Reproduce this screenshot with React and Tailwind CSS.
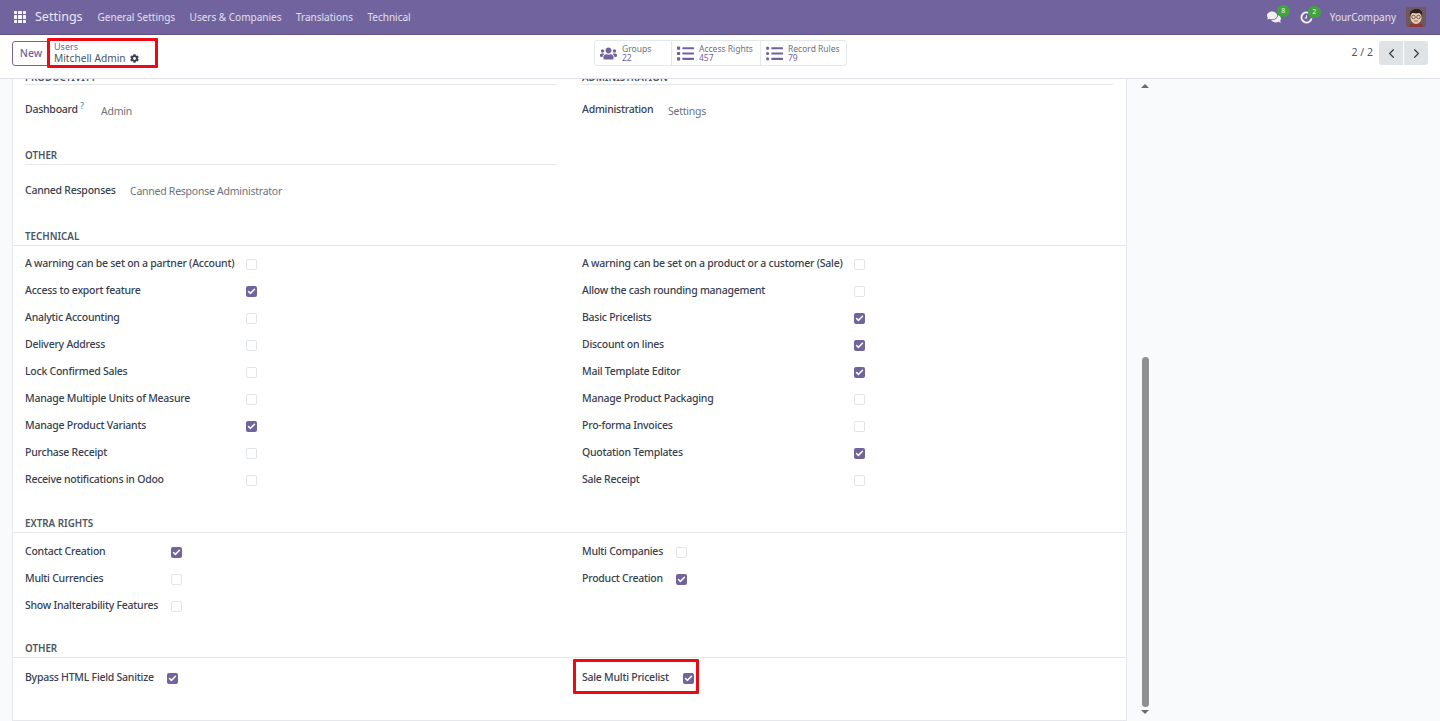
import { FaUsers, FaList, FaListUl, FaCog, FaComments } from 'react-icons/fa'
import { FiCheck, FiChevronLeft, FiChevronRight } from 'react-icons/fi'

const FONT = "font-['Noto_Sans',sans-serif]"

const technicalLeft = [
  ['A warning can be set on a partner (Account)', false],
  ['Access to export feature', true],
  ['Analytic Accounting', false],
  ['Delivery Address', false],
  ['Lock Confirmed Sales', false],
  ['Manage Multiple Units of Measure', false],
  ['Manage Product Variants', true],
  ['Purchase Receipt', false],
  ['Receive notifications in Odoo', false],
]

const technicalRight = [
  ['A warning can be set on a product or a customer (Sale)', false],
  ['Allow the cash rounding management', false],
  ['Basic Pricelists', true],
  ['Discount on lines', true],
  ['Mail Template Editor', true],
  ['Manage Product Packaging', false],
  ['Pro-forma Invoices', false],
  ['Quotation Templates', true],
  ['Sale Receipt', false],
]

const extraLeft = [
  ['Contact Creation', true],
  ['Multi Currencies', false],
  ['Show Inalterability Features', false],
]

const extraRight = [
  ['Multi Companies', false],
  ['Product Creation', true],
]

function Checkbox({ checked }) {
  if (checked) {
    return (
      <span className="w-[11px] h-[11px] mt-[1px] rounded-[2px] bg-[#71639e] flex items-center justify-center shrink-0">
        <FiCheck className="text-white w-[9px] h-[9px]" strokeWidth={4} />
      </span>
    )
  }
  return <span className="w-[11px] h-[11px] mt-[1px] rounded-[2px] border border-[#e2e5e8] bg-white shrink-0" />
}

function Row({ label, checked, labelClass }) {
  return (
    <div className="h-[27px] flex items-center">
      <div className={`${labelClass} text-[10.500px] tracking-[-0.25px] text-[#374151] font-medium whitespace-nowrap`}>{label}</div>
      <Checkbox checked={checked} />
    </div>
  )
}

function Heading({ children }) {
  return (
    <div className="h-[17px] pl-[12px] flex items-center text-[9.800px] font-semibold text-[#4b5563] border-b border-[#e5e7eb]">
      {children}
    </div>
  )
}

function CheckSection({ title, left, right, leftLabel, rightLabel, rowsClass }) {
  return (
    <section>
      <Heading>{title}</Heading>
      <div className={`flex ${rowsClass}`}>
        <div className="w-[569px] pl-[12px]">
          {left.map(([label, checked]) => (
            <Row key={label} label={label} checked={checked} labelClass={leftLabel} />
          ))}
        </div>
        <div>
          {right.map(([label, checked]) => (
            <Row key={label} label={label} checked={checked} labelClass={rightLabel} />
          ))}
        </div>
      </div>
    </section>
  )
}

function StatButton({ icon, label, value, className }) {
  return (
    <div className={`h-[24px] flex items-center border-r border-[#e5e7eb] last:border-r-0 ${className}`}>
      <span className="text-[#71639e] flex justify-center w-[27px] text-[17px] shrink-0">{icon}</span>
      <div className="leading-[9.500px]">
        <div className="text-[8.500px] text-[#6b7280] whitespace-nowrap">{label}</div>
        <div className="text-[8.500px] text-[#71639e]">{value}</div>
      </div>
    </div>
  )
}

function Avatar() {
  return (
    <svg width="20" height="20" viewBox="0 0 20 20" className="rounded-[2px]">
      <rect width="20" height="20" fill="#6e5a5e" />
      <path d="M3 20c0-3 3-4 7-4s7 1 7 4z" fill="#8a3a3a" />
      <ellipse cx="10" cy="10.500" rx="5.500" ry="6.500" fill="#f2cdb0" />
      <path d="M4 9c-1-6 4-7 7-7s6 2 5 7c-1-2-2-3-3-3-3 1-6 0-7 0-1 1-1.500 2-2 3z" fill="#2b211e" />
      <circle cx="7.500" cy="10" r="1.800" fill="none" stroke="#333" strokeWidth=".7" />
      <circle cx="12.500" cy="10" r="1.800" fill="none" stroke="#333" strokeWidth=".7" />
      <path d="M8 14h4" stroke="#8b4a3a" strokeWidth=".8" />
    </svg>
  )
}

export default function App() {
  return (
    <div className={`${FONT} h-[721px] w-[1440px] overflow-hidden flex flex-col bg-[#f9fafb]`}>
      {/* navbar */}
      <header className="h-[35px] shrink-0 bg-[#71639e] border-b border-[#5f5486] flex items-center text-white">
        <div className="ml-[14px] grid grid-cols-3 gap-[1px] w-[12px] h-[12px]">
          {Array.from({ length: 9 }).map((_, i) => (
            <span key={i} className="bg-white/95 rounded-[0.5px]" />
          ))}
        </div>
        <span className="ml-[9px] text-[12.500px] text-white/85">Settings</span>
        <nav className="ml-[15px] flex gap-[14.500px] text-[10px] text-white/80">
          <span>General Settings</span>
          <span>Users &amp; Companies</span>
          <span>Translations</span>
          <span>Technical</span>
        </nav>
        <div className="ml-auto flex items-center">
          <span className="relative mr-[19px]">
            <FaComments className="text-white/90 w-[14px] h-[14px]" />
            <span className="absolute -top-[5px] left-[10px] w-[13px] h-[12px] rounded-full bg-[#3fa33f] text-[7px] leading-[12px] text-center text-white/90">8</span>
          </span>
          <span className="relative mr-[17px]">
            <svg width="13" height="13" viewBox="0 0 14 14" fill="none" stroke="white" strokeWidth="2" opacity=".9" className="block">
              <path d="M9.500 2A5.500 5.500 0 1 0 12.500 8" />
              <path d="M7 4.500V7.500H5" strokeWidth="1.200" />
            </svg>
            <span className="absolute -top-[5px] left-[8px] w-[13px] h-[12px] rounded-full bg-[#3fa33f] text-[7px] leading-[12px] text-center text-white/90">2</span>
          </span>
          <span className="text-[10px] text-white/80">YourCompany</span>
          <span className="ml-[10px] mr-[14px] block"><Avatar /></span>
        </div>
      </header>

      {/* control panel */}
      <div className="h-[44px] shrink-0 bg-white border-b border-[#dee2e6] flex items-start pt-[6px]">
        <button className="ml-[12px] h-[25px] w-[38px] rounded-[3px] border border-[#71639e] text-[10.500px] text-[#71639e] font-medium flex items-center justify-center">New</button>
        <div className="relative -mt-[3px] w-[111px] h-[30px] pl-[7px] flex flex-col justify-center shrink-0 -ml-[3px]">
          <div className="text-[9px] leading-[10px] text-[#71639e]">Users</div>
          <div className="text-[10.200px] leading-[13px] text-[#4b5563] flex items-center gap-[4.500px]">
            Mitchell Admin <FaCog className="w-[9px] h-[9px] text-[#374151]" />
          </div>
          <span className="absolute inset-0 border-[3px] border-[#ee0a14] rounded-[1px]" />
        </div>
        <div className="ml-[436px] -mt-[1px] flex border border-[#e5e7eb] rounded-[3px]">
          <StatButton icon={<FaUsers />} label="Groups" value="22" className="w-[77px]" />
          <StatButton icon={<FaList />} label="Access Rights" value="457" className="w-[89px]" />
          <StatButton icon={<FaListUl />} label="Record Rules" value="79" className="w-[85px]" />
        </div>
        <div className="ml-auto flex items-center">
          <span className="text-[10.500px] text-[#4b5563] mr-[6px]">2 / 2</span>
          <div className="flex mr-[12px] gap-[1px]">
            <span className="w-[24px] h-[24px] bg-[#e0e3e6] rounded-l-[3px] flex items-center justify-center">
              <FiChevronLeft className="w-[15px] h-[15px] text-[#374151]" />
            </span>
            <span className="w-[24px] h-[24px] bg-[#e0e3e6] rounded-r-[3px] flex items-center justify-center">
              <FiChevronRight className="w-[15px] h-[15px] text-[#374151]" />
            </span>
          </div>
        </div>
      </div>

      {/* content */}
      <main className="flex-1 min-h-0 flex overflow-hidden">
        <div className="ml-[12px] w-[1115px] h-[642px] bg-white border-x border-b border-[#e5e7eb] box-border overflow-hidden">
          {/* group titles scrolled under the control panel */}
          <div className="flex -mt-[8px]">
            <div className="w-[569px] pl-[12px] pr-[26px]">
              <div className="h-[14px] text-[9.800px] font-semibold text-[#4b5563] border-b border-[#e5e7eb]">PRODUCTIVITY</div>
              <div className="h-[52px] pt-[2px] flex items-center text-[10.500px] tracking-[-0.25px]">
                <span className="w-[76px] mb-[4px] font-medium text-[#374151]">Dashboard <sup className="text-[#3f8fa8] text-[8px]">?</sup></span>
                <span className="text-[#6b7280]">Admin</span>
              </div>
            </div>
            <div className="w-[531px]">
              <div className="h-[14px] text-[9.800px] font-semibold text-[#4b5563] border-b border-[#e5e7eb]">ADMINISTRATION</div>
              <div className="h-[52px] pt-[2px] flex items-center text-[10.500px] tracking-[-0.25px]">
                <span className="w-[86px] mb-[4px] font-medium text-[#374151]">Administration</span>
                <span className="text-[#6b7280]">Settings</span>
              </div>
            </div>
          </div>

          <div className="ml-[12px] w-[532px] mt-[11px]">
            <div className="h-[17px] pt-[1px] flex items-center text-[9.800px] font-semibold text-[#4b5563] border-b border-[#e5e7eb]">OTHER</div>
            <div className="h-[52px] pt-[2px] flex items-center text-[10.500px] tracking-[-0.25px]">
              <span className="w-[105px] mb-[3px] font-medium text-[#374151]">Canned Responses</span>
              <span className="text-[#6b7280]">Canned Response Administrator</span>
            </div>
          </div>

          <div className="mt-[12px]">
            <CheckSection title="TECHNICAL" left={technicalLeft} right={technicalRight} leftLabel="w-[221px]" rightLabel="w-[272px]" rowsClass="pt-[4px]" />
          </div>
          <div className="mt-[23px]">
            <CheckSection title="EXTRA RIGHTS" left={extraLeft} right={extraRight} leftLabel="w-[146px]" rightLabel="w-[94px]" rowsClass="pt-[5px]" />
          </div>

          <section className="mt-[22px]">
            <Heading>OTHER</Heading>
            <div className="flex pt-[6px]">
              <div className="w-[569px] pl-[12px]">
                <Row label="Bypass HTML Field Sanitize" checked labelClass="w-[142px]" />
              </div>
              <div className="relative">
                <Row label="Sale Multi Pricelist" checked labelClass="w-[101px]" />
                <span className="absolute -left-[9px] -top-[5px] w-[126px] h-[35px] border-[3px] border-[#ee0a14] rounded-[1px]" />
              </div>
            </div>
          </section>
        </div>

        {/* scrollbar */}
        <div className="ml-[14px] w-[8px] flex flex-col items-center pt-[5px]">
          <span className="w-0 h-0 border-x-[4px] border-x-transparent border-b-[4px] border-b-[#6b6b6b]" />
          <span className="w-[7px] h-[350px] mt-[269px] rounded-full bg-[#8f8f8f]" />
          <span className="mt-[3px] w-0 h-0 border-x-[4px] border-x-transparent border-t-[4px] border-t-[#6b6b6b]" />
        </div>
      </main>
    </div>
  )
}
